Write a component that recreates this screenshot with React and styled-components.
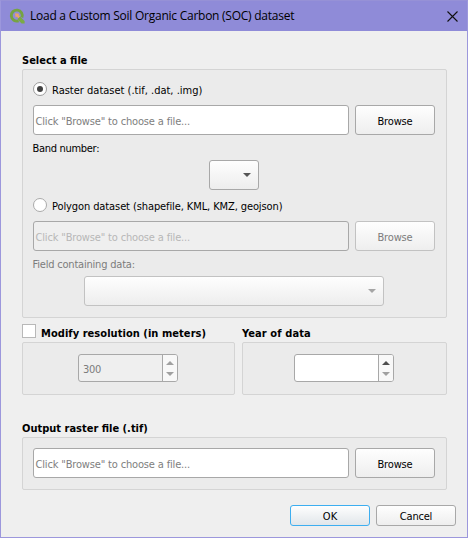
import React from 'react';
import styled, { createGlobalStyle } from 'styled-components';

const GlobalStyle = createGlobalStyle`
  *, *::before, *::after { box-sizing: border-box; }
  body { margin: 0; }
`;

const Dialog = styled.div`
  width: 468px;
  height: 538px;
  display: flex;
  flex-direction: column;
  border: 1px solid #9c97dc;
  border-top-color: #9691d6;
  background: #efefef;
  color: #000;
  font: 11px/16px 'DejaVu Sans Condensed', 'DejaVu Sans', sans-serif;
  white-space: nowrap;
  overflow: hidden;
`;

const TitleBar = styled.header`
  height: 30px;
  flex: none;
  display: flex;
  align-items: center;
  padding: 0 9px 0 8px;
  background: #8f8bd8;
`;

const Title = styled.h1`
  flex: 1;
  margin: 0 0 0 5px;
  font: 400 12px/16px 'Open Sans', 'Noto Sans', sans-serif;
  letter-spacing: -0.25px;
`;

const Content = styled.main`
  display: flex;
  flex-direction: column;
  padding: 21px 20px 0 21px;
`;

const Heading = styled.h2`
  margin: 0;
  height: ${p => p.$height || 17}px;
  padding-top: ${p => p.$top || 1}px;
  font-size: 11px;
  line-height: 16px;
  font-weight: 700;
  letter-spacing: ${p => p.$spacing || 0}px;
`;

const Text = styled.span`
  letter-spacing: ${p => p.$spacing || 0}px;
`;

const Panel = styled.section`
  height: ${p => p.$height}px;
  padding: ${p => p.$padding || '10px'};
  border: 1px solid #d4d4d4;
  border-radius: 2px;
  background: #ebebeb;
`;

const Choice = styled.label`
  display: flex;
  align-items: center;
  gap: 5px;
  height: 16px;
  ${Text} {
    padding-top: 4px;
  }
`;

const RadioMark = styled.span`
  width: 14px;
  height: 14px;
  display: grid;
  place-items: center;
  border: 1px solid ${p => (p.$checked ? '#9c9c9c' : '#aaa')};
  border-radius: 50%;
  background: #fff;
  &::after {
    content: '';
    width: 6px;
    height: 6px;
    border-radius: 50%;
    background: ${p => (p.$checked ? '#414141' : 'transparent')};
  }
`;

const CheckMark = styled.span`
  width: 14px;
  height: 14px;
  border: 1px solid #b8b8b8;
  background: #fff;
`;

const FileRow = styled.div`
  display: flex;
  gap: 6px;
  margin-top: ${p => p.$top || 0}px;
`;

const FileField = styled.div`
  width: 316px;
  height: 30px;
  padding: 8px 1.5px 0;
  border: 1px solid #a8a8a8;
  border-radius: 3px;
  background: ${p => (p.$disabled ? '#efefef' : '#fff')};
  color: ${p => (p.$disabled ? '#b7b7b7' : '#7e7e7e')};
`;

const Button = styled.button`
  width: 80px;
  height: ${p => p.$height || 30}px;
  display: flex;
  align-items: center;
  justify-content: center;
  padding: ${p => (p.$height ? '2px' : '3px')} 0 0;
  border: 1px solid ${p => (p.$primary ? '#3daef0' : p.disabled ? '#c2c2c2' : '#a8a8a8')};
  border-radius: 3px;
  background: ${p => (p.$primary
    ? 'linear-gradient(#fefefe, #e1e6ea)'
    : 'linear-gradient(#fefefe, #eee)')};
  color: ${p => (p.disabled ? '#7c7c7c' : '#000')};
  font: inherit;
`;

const FieldLabel = styled.div`
  height: 15px;
  margin: ${p => p.$top}px 0 0 -0.5px;
  color: ${p => (p.$disabled ? '#7c7c7c' : '#000')};
`;

const Combo = styled.div`
  width: ${p => p.$width}px;
  height: 30px;
  margin: ${p => p.$margin};
  display: flex;
  align-items: center;
  justify-content: flex-end;
  padding-right: 7px;
  border: 1px solid ${p => (p.$disabled ? '#c2c2c2' : '#a8a8a8')};
  border-radius: 3px;
  background: linear-gradient(#fefefe, #ededed);
  color: ${p => (p.$disabled ? '#a5a5a5' : '#555')};
`;

const Columns = styled.div`
  display: grid;
  grid-template-columns: 213px 205px;
  gap: 7px;
  margin-top: 6px;
`;

const HeadingRow = styled.div`
  display: flex;
  gap: 5px;
  height: 18px;
`;

const SpinBox = styled.div`
  width: 100px;
  height: 28px;
  display: flex;
  margin: 11px auto 0 ${p => p.$left}px;
  border: 1px solid #a8a8a8;
  border-radius: 3px;
  background: ${p => (p.$disabled ? '#efefef' : '#fff')};
  color: #7c7c7c;
  overflow: hidden;
`;

const SpinValue = styled.span`
  flex: 1;
  padding: 7px 4px 0;
  letter-spacing: -0.3px;
`;

const Stepper = styled.span`
  width: 15px;
  display: flex;
  flex-direction: column;
  align-items: center;
  justify-content: space-between;
  padding: 6px 0 5px;
  border-left: 1px solid #a8a8a8;
  background: #f8f8f8;
`;

const Actions = styled.footer`
  display: flex;
  justify-content: flex-end;
  gap: 6px;
  margin: 15px -9px 0 0;
`;

const Glyph = styled.svg`
  display: block;
  color: ${p => p.$color || 'inherit'};
`;

const Arrow = ({ up, color }) => (
  <Glyph width="8" height="4" viewBox="0 0 8 4" $color={color}>
    <path d={up ? 'M0 4L4 0L8 4Z' : 'M0 0H8L4 4Z'} fill="currentColor" />
  </Glyph>
);

const QgisLogo = () => (
  <Glyph width="16" height="16" viewBox="0 0 16 16">
    <path d="M12.9 9.6A5.5 5.5 0 1 0 9.6 12.8" fill="none" stroke="#76a343" strokeWidth="2.9" />
    <path d="M9.2 9.8L10.8 8.3L15.6 12.9V15.5H12.6L8.7 11.6Z" fill="#7bab45" />
    <path d="M6 5.2L10.2 5.8L9.4 7L11 8.6L9.3 10.2L7.8 8.6L6.6 9.4Z" fill="#eda663" />
  </Glyph>
);

const CloseIcon = () => (
  <Glyph width="11" height="11" viewBox="0 0 11 11">
    <path d="M0.5 0.5L10.5 10.5M10.5 0.5L0.5 10.5" stroke="#111" strokeWidth="1.1" />
  </Glyph>
);

const FilePicker = ({ disabled, top }) => (
  <FileRow $top={top}>
    <FileField $disabled={disabled}>
      <Text $spacing={-0.16}>Click "Browse" to choose a file...</Text>
    </FileField>
    <Button disabled={disabled}><Text $spacing={-0.15}>Browse</Text></Button>
  </FileRow>
);

const Spin = ({ value, disabled, left }) => (
  <SpinBox $disabled={disabled} $left={left}>
    <SpinValue>{value}</SpinValue>
    <Stepper>
      <Arrow up color={disabled ? '#a0a0a0' : '#4d4d4d'} />
      <Arrow color="#a0a0a0" />
    </Stepper>
  </SpinBox>
);

export default function App() {
  return (
    <>
      <GlobalStyle />
      <Dialog>
        <TitleBar>
          <QgisLogo />
          <Title>Load a Custom Soil Organic Carbon (SOC) dataset</Title>
          <CloseIcon />
        </TitleBar>
        <Content>
          <Heading>Select a file</Heading>
          <Panel $height={249} $padding="11px 10px 0">
            <Choice>
              <RadioMark $checked />
              <Text>Raster dataset (.tif, .dat, .img)</Text>
            </Choice>
            <FilePicker top={8} />
            <FieldLabel $top={6}><Text $spacing={-0.3}>Band number:</Text></FieldLabel>
            <Combo $width={50} $margin="4px 0 7px 176px"><Arrow /></Combo>
            <Choice>
              <RadioMark />
              <Text $spacing={-0.1}>Polygon dataset (shapefile, KML, KMZ, geojson)</Text>
            </Choice>
            <FilePicker disabled top={8} />
            <FieldLabel $disabled $top={6}><Text $spacing={-0.2}>Field containing data:</Text></FieldLabel>
            <Combo $disabled $width={300} $margin="4px 0 0 51px"><Arrow /></Combo>
          </Panel>
          <Columns>
            <div>
              <HeadingRow>
                <CheckMark />
                <Heading $top={2} $spacing={0.05}>Modify resolution (in meters)</Heading>
              </HeadingRow>
              <Panel $height={53} $padding="0"><Spin disabled value="300" left={55} /></Panel>
            </div>
            <div>
              <HeadingRow><Heading $top={2} $spacing={0.1}>Year of data</Heading></HeadingRow>
              <Panel $height={53} $padding="0"><Spin left={51} /></Panel>
            </div>
          </Columns>
          <Heading $top={26} $height={42}>Output raster file (.tif)</Heading>
          <Panel $height={53}><FilePicker /></Panel>
          <Actions>
            <Button $primary $height={21}>OK</Button>
            <Button $height={21}><Text $spacing={-0.2}>Cancel</Text></Button>
          </Actions>
        </Content>
      </Dialog>
    </>
  );
}
